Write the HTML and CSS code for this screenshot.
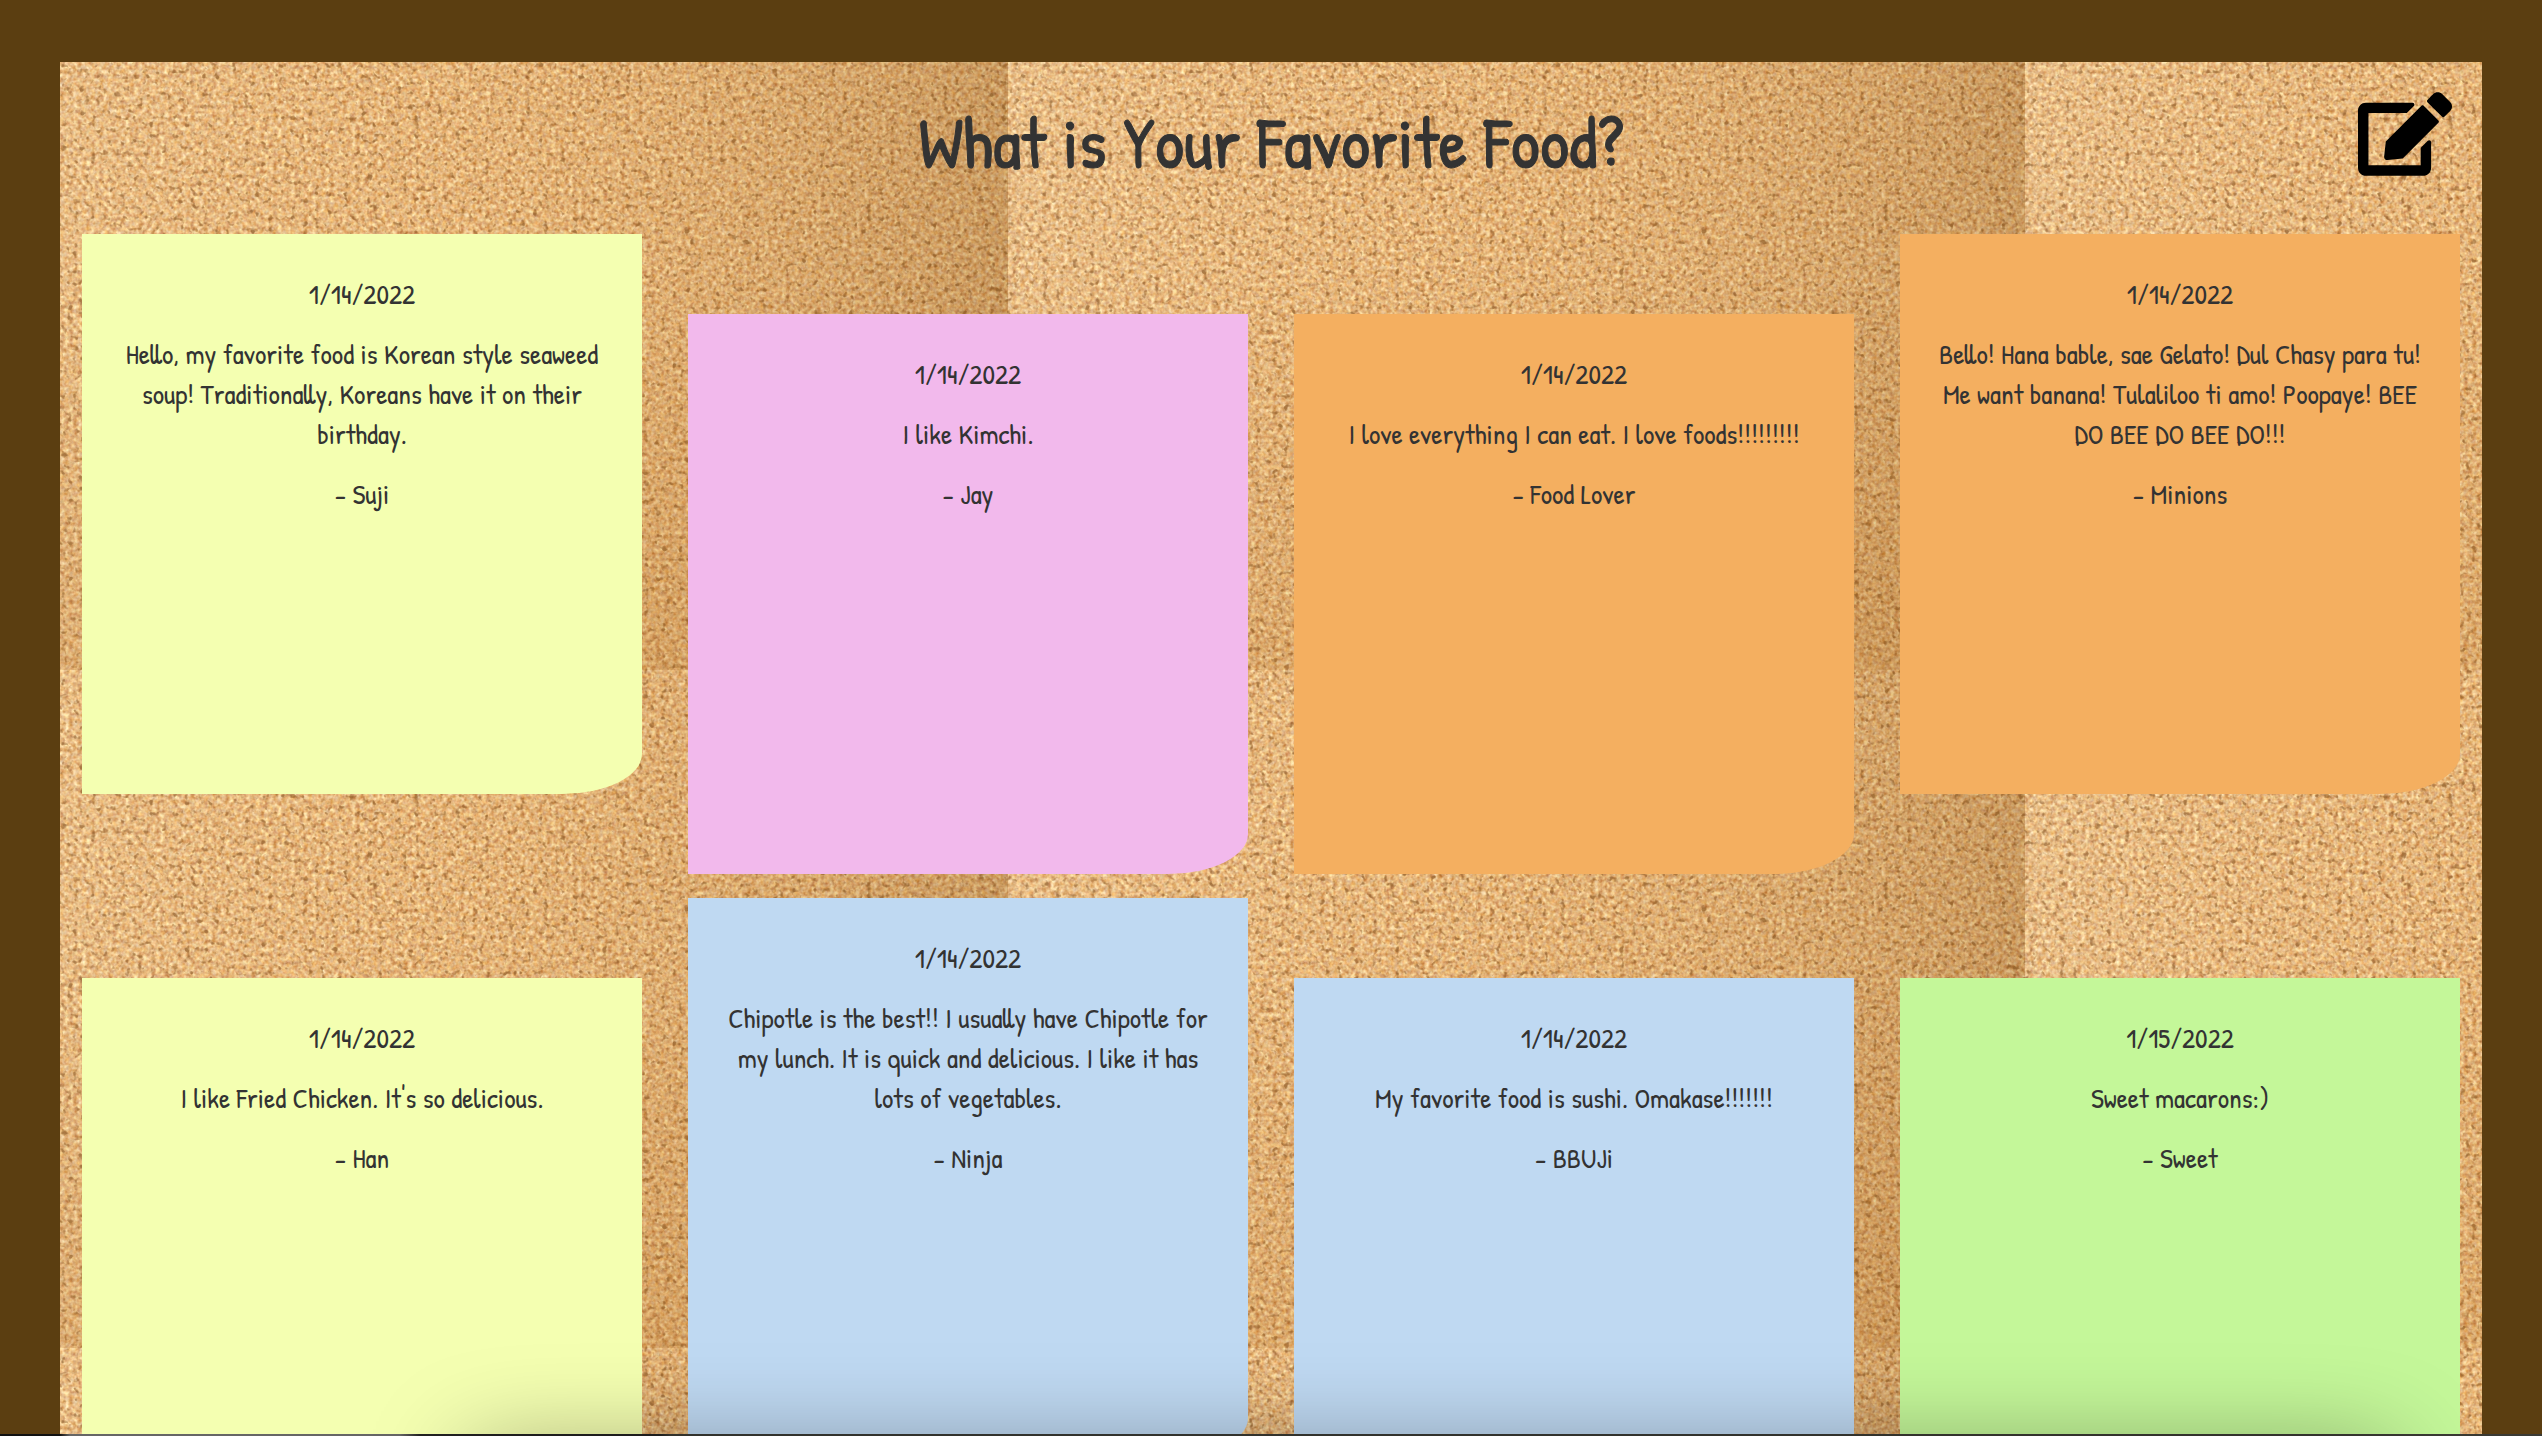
FILE: index.html
```html
<!DOCTYPE html>
<html lang="en">
<head>
<meta charset="utf-8">
<meta name="viewport" content="width=device-width, initial-scale=1">
<title>What is Your Favorite Food?</title>
<link rel="stylesheet" href="styles.css">
</head>
<body>
<div class="frame">
  <main class="board">
    <header class="header">
      <h1 class="title">What is Your Favorite Food?</h1>
      <button class="compose" type="button" aria-label="Write a note">
        <svg viewBox="0 0 576 512" aria-hidden="true"><path d="M402.6 83.2l90.2 90.2c3.8 3.8 3.8 10 0 13.8L274.4 405.6l-92.8 10.3c-12.4 1.4-22.9-9.1-21.5-21.5l10.3-92.8L388.8 83.2c3.8-3.8 10-3.8 13.8 0zm162-22.9l-48.8-48.8c-15.2-15.2-39.9-15.2-55.2 0l-35.4 35.4c-3.8 3.8-3.8 10 0 13.8l90.2 90.2c3.8 3.8 10 3.8 13.8 0l35.4-35.4c15.2-15.3 15.2-40 0-55.2zM384 346.2V448H64V128h229.8c3.2 0 6.2-1.3 8.5-3.5l40-40c7.6-7.6 2.2-20.5-8.5-20.5H48C21.5 64 0 85.5 0 112v352c0 26.5 21.5 48 48 48h352c26.5 0 48-21.5 48-48V306.2c0-10.7-12.9-16-20.5-8.5l-40 40c-2.2 2.3-3.5 5.3-3.5 8.5z"/></svg>
      </button>
    </header>
    <section class="notes">
      <article class="note yellow">
        <p>1/14/2022</p>
        <p>Hello, my favorite food is Korean style seaweed soup! Traditionally, Koreans have it on their birthday.</p>
        <p>- Suji</p>
      </article>
      <article class="note pink low">
        <p>1/14/2022</p>
        <p>I like Kimchi.</p>
        <p>- Jay</p>
      </article>
      <article class="note orange low">
        <p>1/14/2022</p>
        <p>I love everything I can eat. I love foods!!!!!!!!!</p>
        <p>- Food Lover</p>
      </article>
      <article class="note orange">
        <p>1/14/2022</p>
        <p>Bello! Hana bable, sae Gelato! Dul Chasy para tu! Me want banana! Tulaliloo ti amo! Poopaye! BEE DO BEE DO BEE DO!!!</p>
        <p>- Minions</p>
      </article>
      <article class="note yellow low">
        <p>1/14/2022</p>
        <p>I like Fried Chicken. It's so delicious.</p>
        <p>- Han</p>
      </article>
      <article class="note blue">
        <p>1/14/2022</p>
        <p>Chipotle is the best!! I usually have Chipotle for my lunch. It is quick and delicious. I like it has lots of vegetables.</p>
        <p>- Ninja</p>
      </article>
      <article class="note blue low">
        <p>1/14/2022</p>
        <p>My favorite food is sushi. Omakase!!!!!!!</p>
        <p>- BBUJi</p>
      </article>
      <article class="note green low">
        <p>1/15/2022</p>
        <p>Sweet macarons:)</p>
        <p>- Sweet</p>
      </article>
    </section>
  </main>
</div>
<div class="edge"></div>
</body>
</html>
```
FILE: styles.css
```css
* {
  box-sizing: border-box;
}

body {
  margin: 0;
  height: 100vh;
  overflow: hidden;
  background: #5b3e11;
  color: #333;
  font-family: "Patrick Hand", "Liberation Sans Narrow", "Liberation Sans", sans-serif;
  font-size: 28px;
  line-height: 40px;
}

.frame {
  height: 100%;
  padding: 62px 60px 0;
  overflow-y: auto;
  scrollbar-width: none;
}

/* cork: one shaded, grainy tile repeated over the board */
.board {
  padding: 0 22px 24px;
  background-color: #dfb074;
  background-image: url("data:image/svg+xml,%3Csvg xmlns='http://www.w3.org/2000/svg' width='1017' height='678'%3E%3Cdefs%3E%3Cfilter id='n' x='0' y='0' width='100%25' height='100%25' color-interpolation-filters='sRGB'%3E%3CfeTurbulence type='fractalNoise' baseFrequency='.23' numOctaves='2' seed='7' stitchTiles='stitch'/%3E%3CfeColorMatrix values='.35 .2 0 0 .63 .4 .45 0 0 .3 .3 .55 .15 0 0 0 0 0 0 1'/%3E%3C/filter%3E%3Cfilter id='s' x='0' y='0' width='100%25' height='100%25' color-interpolation-filters='sRGB'%3E%3CfeTurbulence type='fractalNoise' baseFrequency='.17' numOctaves='2' seed='23' stitchTiles='stitch'/%3E%3CfeColorMatrix values='0 0 0 0 .56 0 0 0 0 .36 0 0 0 0 .16 5 0 0 0 -3'/%3E%3C/filter%3E%3ClinearGradient id='h'%3E%3Cstop offset='0' stop-color='%23fff0d0' stop-opacity='.12'/%3E%3Cstop offset='.4' stop-color='%23e0a050' stop-opacity='.06'/%3E%3Cstop offset='1' stop-color='%23804c10' stop-opacity='.27'/%3E%3C/linearGradient%3E%3ClinearGradient id='v' x2='0' y2='1'%3E%3Cstop offset='.4' stop-color='%23a05c10' stop-opacity='0'/%3E%3Cstop offset='1' stop-color='%23a05c10' stop-opacity='.16'/%3E%3C/linearGradient%3E%3C/defs%3E%3Crect width='1017' height='678' filter='url(%23n)'/%3E%3Crect width='1017' height='678' filter='url(%23s)' opacity='.75'/%3E%3Crect width='1017' height='678' fill='url(%23h)'/%3E%3Crect width='1017' height='678' fill='url(%23v)'/%3E%3C/svg%3E");
  background-position: -69px -70px;
}

.header {
  display: grid;
  grid-template-columns: 1fr auto 1fr;
  align-items: start;
  height: 172px;
  padding: 30px 8px 0;
}

.title {
  grid-column: 2;
  margin: 0;
  font-size: 72px;
  font-weight: 500;
  line-height: 100px;
  -webkit-text-stroke: 1px #333;
}

.compose {
  justify-self: end;
  padding: 0;
  border: 0;
  background: none;
  cursor: pointer;
}

.compose svg {
  display: block;
  width: 94px;
  height: 84px;
}

.notes {
  display: grid;
  grid-template-columns: repeat(4, 1fr);
  align-items: start;
  gap: 24px 46px;
}

.note {
  aspect-ratio: 1;
  padding: 40px 36px;
  border-bottom-right-radius: 80px 40px;
  text-align: center;
}

.note p {
  margin: 0 0 20px;
}

.low {
  margin-top: 80px;
}

.yellow {
  background: #f4ffb1;
}

.pink {
  background: #f2b9ec;
}

.orange {
  background: #f4af60;
}

.blue {
  background: #bfd9f2;
}

.green {
  background: #c4f799;
}

/* bottom edge of the window with the soft shade above it */
.edge {
  position: fixed;
  inset: auto 0 0;
  height: 2px;
  background: linear-gradient(90deg, #111 60px, #666 70px 400px, #222 420px 660px, #3a3a34 670px);
}

.edge::before {
  content: "";
  position: absolute;
  top: 30px;
  left: 480px;
  right: 160px;
  height: 60px;
  box-shadow: 0 0 100px 10px rgba(0, 0, 0, .4);
}
```
